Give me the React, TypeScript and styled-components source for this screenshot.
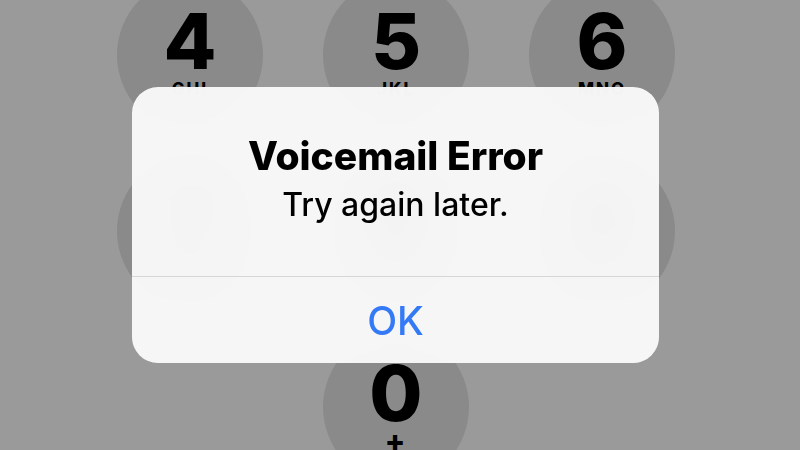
import React from "react";
import styled, { createGlobalStyle } from "styled-components";

const Global = createGlobalStyle`
  html, body {
    margin: 0;
    padding: 0;
    width: 800px;
    height: 450px;
    overflow: hidden;
    background: #999999;
  }
  #root { width: 800px; height: 450px; }
`;

const Screen = styled.div`
  position: relative;
  width: 800px;
  height: 450px;
  overflow: hidden;
  background: #9a9a9a;
  font-family: Inter, "Liberation Sans", sans-serif;
`;

const Keypad = styled.div`
  display: grid;
  grid-template-columns: repeat(3, 146px);
  grid-auto-rows: 152px;
  column-gap: 60px;
  row-gap: 24px;
  padding-left: 117px;
  margin-top: -21px;
`;

const Key = styled.div<{ $empty?: boolean }>`
  display: flex;
  flex-direction: column;
  align-items: center;
  justify-content: center;
  border-radius: 50%;
  background: ${(p) => (p.$empty ? "transparent" : "#8a8a8a")};
`;

const Digit = styled.span`
  font-size: 77px;
  font-weight: 800;
  line-height: 60px;
  color: #000;
`;

const Letters = styled.span<{ $sign?: boolean }>`
  margin-top: 8px;
  font-size: ${(p) => (p.$sign ? "30px" : "17px")};
  font-weight: 800;
  line-height: 20px;
  letter-spacing: 2px;
  color: #000;
`;

const Overlay = styled.div`
  position: absolute;
  inset: 0;
  display: flex;
  align-items: center;
  justify-content: center;
  padding-right: 9px;
`;

const Alert = styled.div`
  width: 527px;
  height: 276px;
  border-radius: 26px;
  background: rgba(249, 249, 249, 0.97);
  backdrop-filter: blur(20px);
  display: flex;
  flex-direction: column;
  overflow: hidden;
`;

const Body = styled.div`
  height: 190px;
  box-sizing: border-box;
  padding-top: 46px;
  display: flex;
  flex-direction: column;
  align-items: center;
  border-bottom: 1px solid #d6d6d6;
`;

const Title = styled.div`
  font-size: 39px;
  font-weight: 800;
  line-height: 46px;
  letter-spacing: 0px;
  color: #000;
`;

const Message = styled.div`
  margin-top: 6px;
  font-size: 32px;
  font-weight: 500;
  line-height: 40px;
  color: #000;
`;

const Action = styled.button`
  flex: 1;
  border: 0;
  background: transparent;
  padding: 0;
  font-family: inherit;
  font-size: 39px;
  font-weight: 500;
  color: #3479f6;
  display: flex;
  align-items: center;
  justify-content: center;
`;

const keys: { d: string; l: string }[] = [
  { d: "4", l: "GHI" },
  { d: "5", l: "JKL" },
  { d: "6", l: "MNO" },
  { d: "7", l: "PQRS" },
  { d: "8", l: "TUV" },
  { d: "9", l: "WXYZ" },
];

export default function App() {
  return (
    <Screen>
      <Global />
      <Keypad>
        {keys.map((k) => (
          <Key key={k.d}>
            <Digit>{k.d}</Digit>
            <Letters>{k.l}</Letters>
          </Key>
        ))}
        <Key $empty />
        <Key>
          <Digit>0</Digit>
          <Letters $sign>+</Letters>
        </Key>
        <Key $empty />
      </Keypad>
      <Overlay>
        <Alert>
          <Body>
            <Title>Voicemail Error</Title>
            <Message>Try again later.</Message>
          </Body>
          <Action>OK</Action>
        </Alert>
      </Overlay>
    </Screen>
  );
}
